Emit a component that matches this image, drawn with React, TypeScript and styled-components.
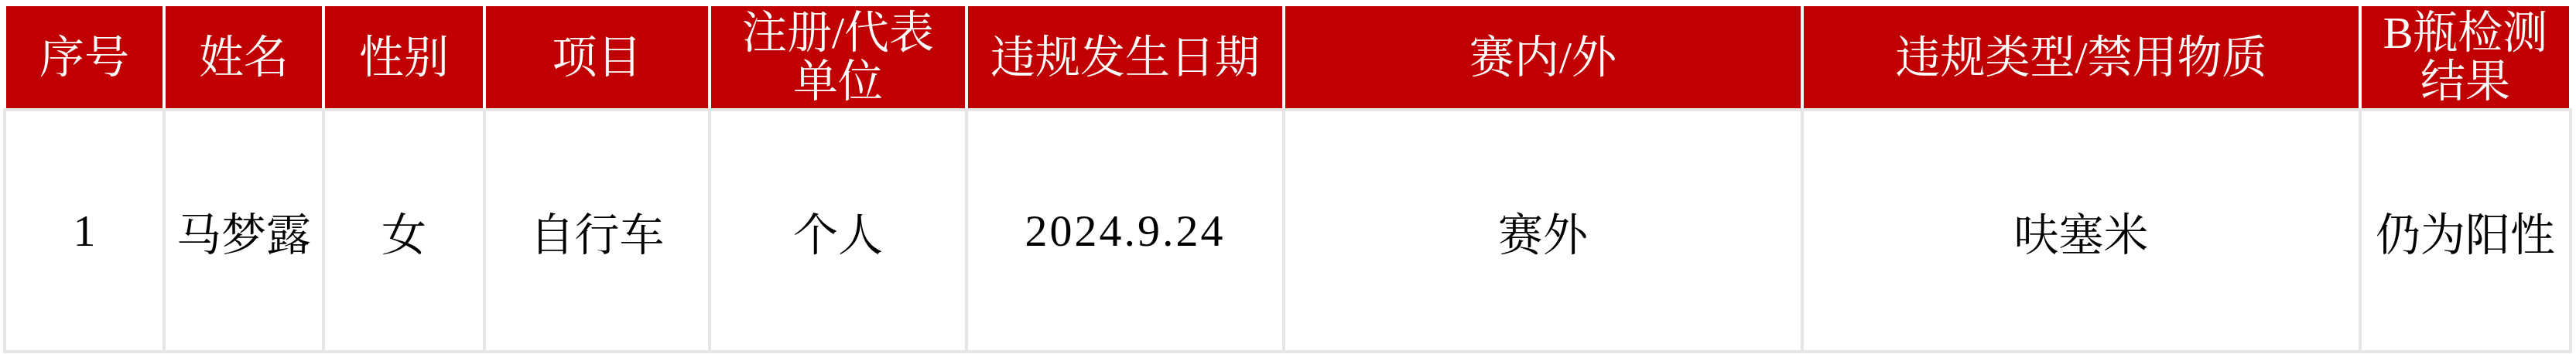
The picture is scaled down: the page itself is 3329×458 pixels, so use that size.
import styled, { createGlobalStyle } from "styled-components"

const GlobalStyle = createGlobalStyle`
    html, body {
        margin: 0;
        padding: 0;
        background: #ffffff;
    }
`

const columns = [202, 202, 204, 287, 328, 406, 666, 717, 268]
const gridColumns = columns.map((w) => `${w}px`).join(" ")

const Sheet = styled.div`
    width: 3320px;
    margin: 4px;
    font-family: "Liberation Serif", "Noto Serif CJK SC", "Noto Sans CJK SC", serif;
`

const Row = styled.div<{ $head?: boolean }>`
    display: grid;
    grid-template-columns: ${gridColumns};
    column-gap: 4px;
    padding: ${(p) => (p.$head ? "4px 4px 0" : "4px")};
    background: ${(p) => (p.$head ? "#ffffff" : "#e6e6e6")};
`

const HeadCell = styled.div`
    height: 132px;
    padding: 0 12px;
    background: #c00000;
    color: #ffffff;
    display: flex;
    align-items: center;
    justify-content: center;
    text-align: center;
    font-size: 58px;
    line-height: 63px;
    overflow: hidden;
`

const BodyCell = styled.div<{ $date?: boolean }>`
    height: 309px;
    padding: 0 12px;
    background: #ffffff;
    color: #000000;
    display: flex;
    align-items: center;
    justify-content: center;
    text-align: center;
    font-size: 58px;
    letter-spacing: ${(p) => (p.$date ? "3px" : "0")};
`

const headers = [
    "序号",
    "姓名",
    "性别",
    "项目",
    "注册/代表单位",
    "违规发生日期",
    "赛内/外",
    "违规类型/禁用物质",
    "B瓶检测结果",
]

const record = ["1", "马梦露", "女", "自行车", "个人", "2024.9.24", "赛外", "呋塞米", "仍为阳性"]

export default function App() {
    return (
        <>
            <GlobalStyle />
            <Sheet>
                <Row $head>
                    {headers.map((h) => (
                        <HeadCell key={h}>{h}</HeadCell>
                    ))}
                </Row>
                <Row>
                    {record.map((v, i) => (
                        <BodyCell key={i} $date={i === 5}>{v}</BodyCell>
                    ))}
                </Row>
            </Sheet>
        </>
    )
}
